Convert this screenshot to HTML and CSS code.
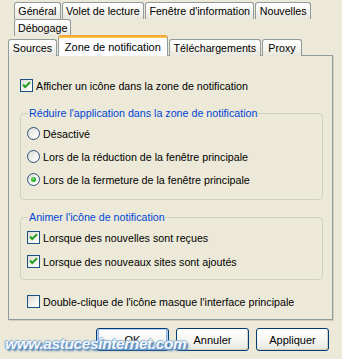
FILE: index.html
```html
<!DOCTYPE html>
<html lang="fr">
<head>
<meta charset="utf-8">
<title>Options</title>
<link rel="stylesheet" href="styles.css">
</head>
<body>
<div class="dialog">
  <div class="tabs">
    <div class="row row1">
      <div class="tab">Général</div>
      <div class="tab">Volet de lecture</div>
      <div class="tab">Fenêtre d'information</div>
      <div class="tab">Nouvelles</div>
    </div>
    <div class="row row2">
      <div class="tab">Débogage</div>
    </div>
    <div class="row row3">
      <div class="tab">Sources</div>
      <div class="tab active">Zone de notification</div>
      <div class="tab">Téléchargements</div>
      <div class="tab">Proxy</div>
    </div>
  </div>
  <div class="panel">
    <label class="opt top-opt"><span class="cb checked"><svg viewBox="0 0 13 13" width="13" height="13"><path d="M3 5.5 L5.2 8 L10 3.2" fill="none" stroke="#21a121" stroke-width="2"/></svg></span>Afficher un icône dans la zone de notification</label>

    <fieldset class="group g1">
      <legend>Réduire l'application dans la zone de notification</legend>
      <label class="opt"><span class="rb"></span>Désactivé</label>
      <label class="opt"><span class="rb"></span>Lors de la réduction de la fenêtre principale</label>
      <label class="opt"><span class="rb on"><span class="dot"></span></span>Lors de la fermeture de la fenêtre principale</label>
    </fieldset>

    <fieldset class="group g2">
      <legend>Animer l'icône de notification</legend>
      <label class="opt"><span class="cb checked"><svg viewBox="0 0 13 13" width="13" height="13"><path d="M3 5.5 L5.2 8 L10 3.2" fill="none" stroke="#21a121" stroke-width="2"/></svg></span>Lorsque des nouvelles sont reçues</label>
      <label class="opt"><span class="cb checked"><svg viewBox="0 0 13 13" width="13" height="13"><path d="M3 5.5 L5.2 8 L10 3.2" fill="none" stroke="#21a121" stroke-width="2"/></svg></span>Lorsque des nouveaux sites sont ajoutés</label>
    </fieldset>

    <label class="opt last-opt"><span class="cb"></span>Double-clique de l'icône masque l'interface principale</label>
  </div>
  <div class="buttons">
    <button class="btn default">OK</button>
    <button class="btn">Annuler</button>
    <button class="btn">Appliquer</button>
  </div>
  <div class="watermark">www.astucesinternet.com</div>
</div>
</body>
</html>
```

FILE: styles.css
```css
html, body {
  margin: 0;
  padding: 0;
  background: #ece9d8;
}
body {
  font-family: "Liberation Sans", Arial, sans-serif;
  font-size: 10.7px;
  color: #000;
  width: 342px;
  height: 359px;
  overflow: hidden;
}
.dialog {
  position: relative;
  width: 342px;
  height: 359px;
}
.tabs {
  padding-top: 2px;
}
.row {
  display: flex;
  gap: 1px;
  height: 17px;
}
.row1, .row2 {
  margin-left: 14px;
}
.row1 {
  width: 297px;
}
.row3 {
  margin-left: 8px;
  width: 294px;
  height: 20px;
  align-items: flex-end;
  position: relative;
  z-index: 2;
  margin-bottom: -1px;
}
.tab {
  box-sizing: border-box;
  height: 17px;
  min-width: 40px;
  padding: 1px 3px 0 3px;
  border: 1px solid #919b9c;
  border-bottom: none;
  border-radius: 3px 3px 0 0;
  background: linear-gradient(#ffffff, #f3f2ec 60%, #e8e6dc);
  line-height: 14px;
  white-space: nowrap;
  text-align: center;
}
.row1 .tab, .row3 .tab {
  flex: 1 0 auto;
}
.row3 .tab {
  height: 17px;
}
.row3 .tab.active {
  height: 21px;
  padding: 3px 5px 0 5px;
  background: #fcfcfe;
  border-color: #919b9c;
  border-top: 2px solid #f3a93e;
  box-shadow: inset 0 1px 0 #ffc83c;
  font-size: 11px;
}
.panel {
  box-sizing: border-box;
  margin-left: 8px;
  width: 325px;
  height: 265px;
  border: 1px solid #919b9c;
  box-shadow: 1px 1px 0 #d0cebf;
  background: #ece9d8;
  padding: 23px 0 0 11px;
  position: relative;
  z-index: 1;
}
.opt {
  display: flex;
  align-items: center;
  height: 13px;
  white-space: nowrap;
}
.cb, .rb {
  box-sizing: border-box;
  width: 13px;
  height: 13px;
  flex: none;
  margin-right: 3px;
  border: 1px solid #1c5180;
  background: linear-gradient(135deg, #dcdcd5, #f4f4f1 60%, #ffffff);
  display: flex;
  align-items: center;
  justify-content: center;
}
.cb svg {
  display: block;
  margin: -1px;
}
.rb {
  border-radius: 50%;
  border-color: #2d4e7a;
}
.rb .dot {
  width: 5px;
  height: 5px;
  border-radius: 50%;
  background: radial-gradient(circle at 40% 40%, #5ee35e, #21a121 70%);
}
.group {
  margin: 0;
  padding: 0 0 0 6px;
  border: 1px solid #d0d0bf;
  border-radius: 4px;
  width: 303px;
  box-sizing: border-box;
  min-width: 0;
}
.group legend {
  color: #0046d5;
  padding: 0 1px;
  margin-left: 1px;
  line-height: 12px;
}
.g1 {
  margin-top: 15px;
  height: 93px;
  padding-top: 8px;
}
.g1 .opt + .opt {
  margin-top: 10px;
}
.g2 {
  margin-top: 11px;
  height: 69px;
  padding-top: 8px;
}
.g2 .opt + .opt {
  margin-top: 11px;
}
.last-opt {
  margin-top: 15px;
  margin-left: 7px;
}
.buttons {
  display: flex;
  gap: 7px;
  padding-left: 96px;
  margin-top: 8px;
}
.btn {
  box-sizing: border-box;
  width: 73px;
  height: 23px;
  border: 1px solid #003c74;
  border-radius: 3px;
  background: linear-gradient(#ffffff, #f4f4f0 60%, #e6e5de);
  font-family: "Liberation Sans", Arial, sans-serif;
  font-size: 11px;
  color: #000;
  padding: 0;
  box-shadow: inset -1px -1px 0 #d6d0c5;
}
.btn.default {
  box-shadow: inset 0 0 0 1px #b8d0f4, inset 0 -1px 0 2px #8eb0ec;
}
.watermark {
  position: absolute;
  left: 5px;
  top: 335px;
  font-family: "Liberation Sans", Arial, sans-serif;
  font-weight: bold;
  font-style: italic;
  font-size: 15.5px;
  letter-spacing: -0.4px;
  color: #f4f8fc;
  text-shadow: 1px 1px 1px #5d8fc0, -1px 0 1px #7aa5cf, 0 -1px 1px #8fb2d6, 2px 2px 2px #4f7fb0;
  z-index: 5;
}
```
